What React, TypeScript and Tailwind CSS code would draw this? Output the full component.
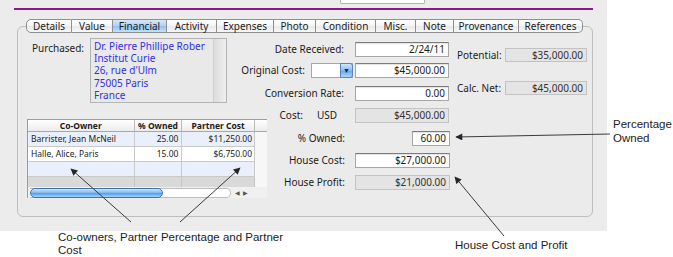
const tabs = [
  { label: 'Details', cls: 'w-[46px] border-l rounded-l-[5px]' },
  { label: 'Value', cls: 'w-[41px]' },
  { label: 'Financial', cls: 'w-[54px]', active: true },
  { label: 'Activity', cls: 'w-[50px]' },
  { label: 'Expenses', cls: 'w-[57px]' },
  { label: 'Photo', cls: 'w-[42px]' },
  { label: 'Condition', cls: 'w-[60px]' },
  { label: 'Misc.', cls: 'w-[40px]' },
  { label: 'Note', cls: 'w-[38px]' },
  { label: 'Provenance', cls: 'w-[65px]' },
  { label: 'References', cls: 'w-[64px] rounded-r-[5px]' },
]

const owners = [
  { name: 'Barrister, Jean McNeil', pct: '25.00', cost: '$11,250.00', bg: 'bg-[#eaf0fb]' },
  { name: 'Halle, Alice, Paris', pct: '15.00', cost: '$6,750.00', bg: 'bg-white' },
  { name: '', pct: '', cost: '', bg: 'bg-[#eaf0fb]' },
]

function Field({ value, gray, w = 'w-[94px]' }: { value: string; gray?: boolean; w?: string }) {
  return (
    <div
      className={`${w} h-[15px] border text-right pr-[3px] leading-[13px] ${
        gray
          ? 'bg-[#e4e4e4] border-[#c2c2c2] text-[#333]'
          : 'bg-white border-[#a6a6a6] border-t-[#7c7c7c] shadow-[inset_0_1px_1px_rgba(0,0,0,0.12)]'
      }`}
    >
      {value}
    </div>
  )
}

export default function App() {
  return (
    <div className="relative w-[673px] h-[257px] overflow-hidden bg-white font-['Noto_Sans',sans-serif] text-[10px] text-[#1c1c1c]">
      <div className="flex">
        {/* dialog panel */}
        <div className="w-[607px] h-[231px] shrink-0 bg-[#ececec]">
          <div className="ml-[340px] w-[85px] h-[4px] bg-white border border-t-0 border-[#b4b4b4] rounded-b-[2px]" />
          <div className="mt-[4px] ml-[14px] w-[579px] h-[2px] bg-[#8a1a8c]" />

          {/* tabs */}
          <div className="relative z-10 mt-[9px] ml-[26px] flex h-[14px]">
            {tabs.map((t) => (
              <div
                key={t.label}
                className={`${t.cls} flex items-center justify-center border-y border-r border-[#8f8f8f] leading-none ${
                  t.active
                    ? 'bg-[linear-gradient(to_bottom,#d6e9fc,#acd2f6_50%,#8ec1f1_51%,#c3e1fb)]'
                    : 'bg-[linear-gradient(to_bottom,#ffffff,#f4f4f4_50%,#e9e9e9_51%,#f7f7f7)]'
                }`}
              >
                {t.label}
              </div>
            ))}
          </div>

          {/* group frame */}
          <div className="-mt-[7px] ml-[17px] w-[576px] h-[191px] rounded-[6px] border border-[#bdbdbd] bg-[#ebebeb] flex pl-[9px]">
            {/* left column */}
            <div className="w-[203px] shrink-0">
              <div className="mt-[11px] flex">
                <div className="w-[63px] pl-[5px] pt-[3px] leading-[14px]">Purchased:</div>
                <div className="w-[137px] h-[65px] flex border border-[#b3b3b3] bg-[#e9e9e9]">
                  <div className="flex-1 pl-[3px] pt-[1px] leading-[12.2px] text-[#3030ea] whitespace-nowrap overflow-hidden">
                    Dr. Pierre Phillipe Rober
                    <br />
                    Institut Curie
                    <br />
                    26, rue d'Ulm
                    <br />
                    75005 Paris
                    <br />
                    France
                  </div>
                  <div className="w-[13px] border-l border-[#d2d2d2] bg-[linear-gradient(to_right,#dcdcdc,#efefef)]" />
                </div>
              </div>

              {/* co-owner table */}
              <div className="mt-[16px] w-[240px] text-[8.5px] border-l border-t border-[#9c9c9c]">
                <div className="flex h-[12px] font-bold leading-[11px] bg-[linear-gradient(to_bottom,#ffffff,#ececec)] border-b border-[#a8a8a8]">
                  <div className="w-[107px] text-center border-r border-[#b9b9b9]">Co-Owner</div>
                  <div className="w-[48px] text-center border-r border-[#b9b9b9]">% Owned</div>
                  <div className="w-[73px] text-center border-r border-[#b9b9b9]">Partner Cost</div>
                  <div className="w-[12px]" />
                </div>
                {owners.map((o, i) => (
                  <div key={i} className="flex h-[15px] leading-[14px]">
                    <div className={`w-[107px] pl-[3px] border-r border-b border-[#c9c9c9] ${o.bg}`}>{o.name}</div>
                    <div className={`w-[48px] text-right pr-[3px] border-r border-b border-[#c9c9c9] ${o.bg}`}>{o.pct}</div>
                    <div className={`w-[73px] text-right pr-[2px] border-r border-b border-[#c9c9c9] ${o.bg}`}>{o.cost}</div>
                    <div className="w-[12px] bg-[#f7f7f7]" />
                  </div>
                ))}
                <div className="flex h-[10px]">
                  <div className="w-[107px] bg-[#d9d9d9] border-r border-[#c4c4c4]" />
                  <div className="w-[48px] bg-[#d9d9d9] border-r border-[#c4c4c4]" />
                  <div className="w-[73px] bg-[#d9d9d9] border-r border-[#c4c4c4]" />
                  <div className="w-[12px] bg-[#f7f7f7]" />
                </div>
                <div className="flex h-[11px] items-center bg-[#f0f0f0]">
                  <div className="ml-[2px] flex w-[201px] h-[10px] items-center rounded-r-full border border-l-0 border-[#bcbcbc] bg-white">
                    <div className="w-[133px] h-[10px] rounded-full border border-[#3f73b5] bg-[linear-gradient(to_bottom,#cfe6fc,#79b6f1_50%,#4f9be9_51%,#a7d4fa)]" />
                  </div>
                  <div className="ml-[4px] flex gap-[3px] text-[6px] leading-none text-[#555]">
                    <span>◀</span>
                    <span>▶</span>
                  </div>
                </div>
              </div>
            </div>

            {/* middle column */}
            <div className="w-[220px] shrink-0 pt-[15px]">
              <div className="flex items-center h-[15px]">
                <div className="w-[114px] text-right">Date Received:</div>
                <div className="ml-[11px]"><Field value="2/24/11" /></div>
              </div>
              <div className="mt-[6px] flex items-center h-[15px]">
                <div className="w-[75px] text-right">Original Cost:</div>
                <div className="ml-[6px] flex w-[42px] h-[15px] border border-[#a6a6a6] bg-white">
                  <div className="flex-1" />
                  <div className="w-[13px] -my-px -mr-px flex items-center justify-center rounded-r-[3px] border border-[#5a85bb] bg-[linear-gradient(to_bottom,#d2e8fc,#84bdf2_50%,#5ea6ec_51%,#b0d8fb)] text-[7px] leading-none text-[#1b2a3a]">
                    ▼
                  </div>
                </div>
                <div className="ml-[2px]"><Field value="$45,000.00" /></div>
              </div>
              <div className="mt-[8px] flex items-center h-[15px]">
                <div className="w-[114px] text-right">Conversion Rate:</div>
                <div className="ml-[11px]"><Field value="0.00" /></div>
              </div>
              <div className="mt-[7px] flex items-center h-[15px]">
                <div className="w-[73px] text-right">Cost:</div>
                <div className="ml-[14px] w-[38px]">USD</div>
                <Field value="$45,000.00" gray />
              </div>
              <div className="mt-[8px] flex items-center h-[15px]">
                <div className="w-[115px] text-right">% Owned:</div>
                <div className="ml-[67px]"><Field value="60.00" w="w-[38px]" /></div>
              </div>
              <div className="mt-[7px] flex items-center h-[15px]">
                <div className="w-[115px] text-right">House Cost:</div>
                <div className="ml-[10px]"><Field value="$27,000.00" w="w-[95px]" /></div>
              </div>
              <div className="mt-[7px] flex items-center h-[15px]">
                <div className="w-[115px] text-right">House Profit:</div>
                <div className="ml-[10px]"><Field value="$21,000.00" w="w-[95px]" gray /></div>
              </div>
            </div>

            {/* right column */}
            <div className="ml-[7px] pt-[21px]">
              <div className="flex items-center h-[14px]">
                <div className="w-[48px]">Potential:</div>
                <div className="w-[82px] h-[14px] border border-[#c2c2c2] bg-[#e4e4e4] text-right pr-[3px] leading-[12px] text-[#333]">
                  $35,000.00
                </div>
              </div>
              <div className="mt-[19px] flex items-center h-[14px]">
                <div className="w-[48px]">Calc. Net:</div>
                <div className="w-[82px] h-[14px] border border-[#c2c2c2] bg-[#e4e4e4] text-right pr-[3px] leading-[12px] text-[#333]">
                  $45,000.00
                </div>
              </div>
            </div>
          </div>
        </div>

        {/* right annotation */}
        <div className="pl-[6px] pt-[117px] font-['Liberation_Sans',Arial,sans-serif] text-[11.5px] leading-[14px] text-[#222]">
          Percentage
          <br />
          Owned
        </div>
      </div>

      {/* bottom annotations */}
      <div className="flex font-['Liberation_Sans',Arial,sans-serif] text-[11.5px] leading-[13px] text-[#222]">
        <div className="ml-[58px] w-[300px]">
          Co-owners, Partner Percentage and Partner
          <br />
          Cost
        </div>
        <div className="ml-[97px] mt-[8px]">House Cost and Profit</div>
      </div>

      {/* callout arrows */}
      <svg className="pointer-events-none absolute inset-0" width="673" height="257" viewBox="0 0 673 257">
        <defs>
          <marker id="head" viewBox="0 0 10 10" refX="9" refY="5" markerWidth="9" markerHeight="7" orient="auto">
            <path d="M0 0 L10 5 L0 10 z" fill="#262626" />
          </marker>
        </defs>
        <g stroke="#3a3a3a" strokeWidth="1" fill="none">
          <line x1="131" y1="222" x2="71" y2="169" markerEnd="url(#head)" />
          <line x1="180" y1="222" x2="240" y2="168" markerEnd="url(#head)" />
          <line x1="504" y1="236" x2="455" y2="177" markerEnd="url(#head)" />
          <line x1="610" y1="134" x2="456" y2="137" markerEnd="url(#head)" />
        </g>
      </svg>
    </div>
  )
}
